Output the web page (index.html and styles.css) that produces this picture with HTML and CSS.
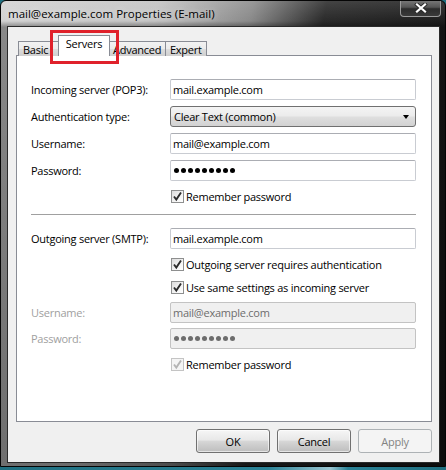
FILE: index.html
```html
<!DOCTYPE html>
<html>
<head>
<meta charset="utf-8">
<link rel="stylesheet" href="styles.css">
</head>
<body>
<div class="window">
  <div class="titlebar">
    <span class="title">mail@example.com Properties (E-mail)</span>
    <div class="close">
      <svg width="16" height="10" viewBox="0 0 16 10"><path d="M4 1.5 L12 8.5 M12 1.5 L4 8.5" stroke="#2a2a2a" stroke-width="4" stroke-linecap="square"/><path d="M4 1.5 L12 8.5 M12 1.5 L4 8.5" stroke="#ffffff" stroke-width="2.2" stroke-linecap="square"/></svg>
    </div>
  </div>
  <div class="client">
    <div class="tabs">
      <div class="tab tab-basic">Basic</div>
      <div class="tab tab-servers selected">Servers</div>
      <div class="tab tab-advanced">Advanced</div>
      <div class="tab tab-expert">Expert</div>
    </div>
    <div class="panel">
      <div class="row">
        <span class="label">Incoming server (POP3):</span>
        <div class="field">mail.example.com</div>
      </div>
      <div class="row gap6">
        <span class="label">Authentication type:</span>
        <div class="select">Clear Text (common)<span class="arrow"></span></div>
      </div>
      <div class="row gap6">
        <span class="label">Username:</span>
        <div class="field">mail@example.com</div>
      </div>
      <div class="row gap6">
        <span class="label">Password:</span>
        <div class="field"><span class="dots"><i></i><i></i><i></i><i></i><i></i><i></i><i></i><i></i><i></i></span></div>
      </div>
      <div class="check-row gap6">
        <span class="box"><svg width="11" height="11" viewBox="0 0 11 11"><path d="M2 5.5 L4.3 8.5 L9 1.5" fill="none" stroke="#2c2c2c" stroke-width="1.9"/></svg></span>
        <span>Remember password</span>
      </div>
      <div class="separator"></div>
      <div class="row gap13">
        <span class="label">Outgoing server (SMTP):</span>
        <div class="field">mail.example.com</div>
      </div>
      <div class="check-row gap6">
        <span class="box"><svg width="11" height="11" viewBox="0 0 11 11"><path d="M2 5.5 L4.3 8.5 L9 1.5" fill="none" stroke="#2c2c2c" stroke-width="1.9"/></svg></span>
        <span>Outgoing server requires authentication</span>
      </div>
      <div class="check-row gap5">
        <span class="box"><svg width="11" height="11" viewBox="0 0 11 11"><path d="M2 5.5 L4.3 8.5 L9 1.5" fill="none" stroke="#2c2c2c" stroke-width="1.9"/></svg></span>
        <span>Use same settings as incoming server</span>
      </div>
      <div class="row gap6 disabled">
        <span class="label">Username:</span>
        <div class="field">mail@example.com</div>
      </div>
      <div class="row gap5 disabled">
        <span class="label">Password:</span>
        <div class="field"><span class="dots"><i></i><i></i><i></i><i></i><i></i><i></i><i></i><i></i><i></i></span></div>
      </div>
      <div class="check-row gap6 disabled">
        <span class="box"><svg width="11" height="11" viewBox="0 0 11 11"><path d="M2 5.5 L4.3 8.5 L9 1.5" fill="none" stroke="#b4b4b4" stroke-width="1.9"/></svg></span>
        <span>Remember password</span>
      </div>
    </div>
    <div class="buttons">
      <div class="button">OK</div>
      <div class="button">Cancel</div>
      <div class="button disabled-btn">Apply</div>
    </div>
  </div>
  <div class="highlight"></div>
</div>
</body>
</html>
```
FILE: styles.css
```css
html, body {
  margin: 0;
  padding: 0;
}
body {
  width: 446px;
  height: 470px;
  overflow: hidden;
  background: linear-gradient(to right, #1f6f80 0%, #2a8296 60%, #9cc7d2 74%, #2a8296 78%, #1f6f80 100%);
  font-family: "Segoe UI", "Open Sans", "Noto Sans", sans-serif;
  font-size: 11px;
  letter-spacing: -0.25px;
  color: #000;
}
.window {
  position: relative;
  width: 446px;
  height: 467px;
  box-sizing: border-box;
  border: 1px solid #050505;
  border-radius: 6px 6px 0 0;
  background:
    linear-gradient(to bottom, rgba(255,255,255,0.12) 0px, rgba(255,255,255,0) 20px, rgba(0,0,0,0.35) 26px, rgba(0,0,0,0.45) 100%),
    linear-gradient(100deg, #d2d2d2 0%, #c2c2c2 30%, #8a8a8a 48%, #2a2a2a 62%, #151515 100%);
  display: flex;
  flex-direction: column;
  overflow: hidden;
}
.titlebar {
  height: 25px;
  flex: none;
  display: flex;
  align-items: flex-start;
  justify-content: space-between;
}
.title {
  margin: 5px 0 0 7px;
  font-size: 11.5px;
  letter-spacing: 0;
  color: #000;
  text-shadow: 0 0 6px rgba(255,255,255,0.7);
}
.close {
  width: 41px;
  height: 17px;
  margin-right: 4px;
  margin-top: -1px;
  box-sizing: border-box;
  border: 1px solid #9a9a9a;
  border-top: none;
  border-radius: 0 0 4px 4px;
  background: linear-gradient(to bottom, #7a7a7a 0%, #555 45%, #2c2c2c 55%, #3a3a3a 100%);
  display: flex;
  align-items: center;
  justify-content: center;
}
.close svg {
  display: block;
}
.client {
  flex: none;
  margin: 0 5px 0 6px;
  height: 437px;
  box-sizing: border-box;
  border: 1px solid #2a2a2a;
  background: #f0f0f0;
  padding: 9px 7px 0 8px;
  display: flex;
  flex-direction: column;
}
.tabs {
  display: flex;
  align-items: flex-end;
  height: 20px;
  margin-bottom: -1px;
  padding-left: 2px;
  position: relative;
  z-index: 1;
}
.tab {
  box-sizing: border-box;
  height: 15px;
  border: 1px solid #898c95;
  border-bottom: none;
  background: linear-gradient(to bottom, #f2f2f2 0%, #ebebeb 50%, #dddddd 50%, #cfcfcf 100%);
  display: flex;
  align-items: center;
  justify-content: flex-start;
  padding-left: 4px;
  margin-left: -1px;
  line-height: 1;
  padding-top: 1px;
}
.tab:first-child {
  margin-left: 0;
}
.tab-basic { width: 42px; }
.tab-servers { width: 52px; }
.tab-advanced { width: 58px; }
.tab-expert { width: 42px; }
.tab.selected {
  height: 21px;
  background: #fff;
  position: relative;
  z-index: 2;
  padding-top: 0;
  padding-left: 0;
  justify-content: center;
  padding-bottom: 5px;
  margin-left: -2px;
  margin-right: -1px;
}
.panel {
  width: 416px;
  height: 367px;
  box-sizing: border-box;
  border: 1px solid #898c95;
  background: #fff;
  padding: 23px 15px 0 14px;
  display: flex;
  flex-direction: column;
}
.row {
  display: flex;
  align-items: center;
  height: 21px;
}
.gap5 { margin-top: 5px; }
.gap6 { margin-top: 6px; }
.gap13 { margin-top: 13px; }
.label {
  width: 139px;
  flex: none;
}
.field {
  width: 246px;
  height: 21px;
  box-sizing: border-box;
  border: 1px solid #c9ccd2;
  border-top-color: #abadb3;
  border-radius: 2px;
  background: #fff;
  padding-left: 2px;
  display: flex;
  align-items: center;
}
.dots {
  display: flex;
  gap: 2px;
  padding-left: 1px;
}
.dots i {
  display: block;
  width: 5px;
  height: 5px;
  border-radius: 50%;
  background: #000;
}
.select {
  position: relative;
  width: 246px;
  height: 21px;
  box-sizing: border-box;
  border: 1px solid #707070;
  border-radius: 3px;
  background: linear-gradient(to bottom, #f4f4f4 0%, #ececec 45%, #dedede 55%, #d2d2d2 100%);
  padding-left: 3px;
  display: flex;
  align-items: center;
}
.arrow {
  position: absolute;
  right: 6px;
  top: 8px;
  width: 0;
  height: 0;
  border-left: 3.5px solid transparent;
  border-right: 3.5px solid transparent;
  border-top: 4px solid #000;
}
.check-row {
  display: flex;
  align-items: center;
  height: 18px;
  padding-left: 140px;
}
.box {
  width: 13px;
  height: 13px;
  box-sizing: border-box;
  border: 1px solid #8e8f8f;
  background: linear-gradient(135deg, #dcdcdc 0%, #f4f4f4 60%, #ffffff 100%);
  display: flex;
  align-items: center;
  justify-content: center;
  margin-right: 2px;
  flex: none;
}
.box svg {
  display: block;
}
.separator {
  margin-top: 9px;
  height: 1px;
  background: #a0a0a0;
  width: 385px;
}
.disabled .label {
  color: #a0a0a0;
}
.disabled .field {
  background: #f0f0f0;
  border-color: #c3c3c3;
  color: #6d6d6d;
}
.disabled .dots i {
  background: #6d6d6d;
}
.check-row.disabled .box {
  border-color: #c4c4c4;
  background: #f4f4f4;
}
.check-row.disabled {
  color: #000;
}
.buttons {
  display: flex;
  justify-content: flex-end;
  gap: 7px;
  margin-top: 7px;
  width: 416px;
}
.button {
  width: 74px;
  height: 24px;
  box-sizing: border-box;
  border: 1px solid #707070;
  border-radius: 3px;
  background: linear-gradient(to bottom, #f6f6f6 0%, #e8e8e8 45%, #d6d6d6 52%, #bdbdbd 100%);
  display: flex;
  align-items: center;
  justify-content: center;
  box-shadow: inset 0 0 0 1px rgba(255,255,255,0.6);
}
.button.disabled-btn {
  border-color: #adb2b5;
  background: #f4f4f4;
  color: #838383;
  box-shadow: none;
}
.highlight {
  position: absolute;
  left: 49px;
  top: 29px;
  width: 69px;
  height: 34px;
  box-sizing: border-box;
  border: 3px solid #e0212b;
  z-index: 5;
}
```
